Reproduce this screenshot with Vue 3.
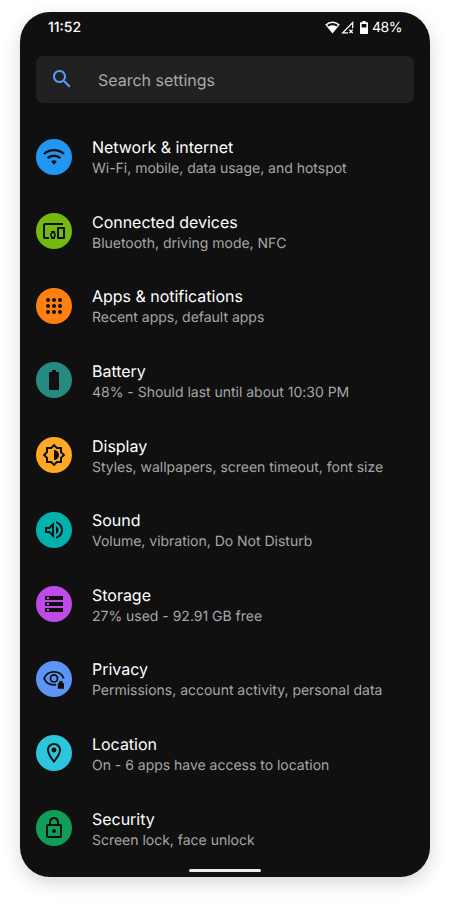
<script setup>
const items = [
  { title: 'Network & internet', detail: 'Wi-Fi, mobile, data usage, and hotspot', tone: 'blue', kind: 'wifi' },
  {
    title: 'Connected devices',
    detail: 'Bluetooth, driving mode, NFC',
    tone: 'lime',
    icon: 'M3 6h18V4H3c-1.1 0-2 .9-2 2v12c0 1.1.9 2 2 2h4v-2H3V6zm10 6H9v1.78c-.61.55-1 1.33-1 2.22s.39 1.67 1 2.22V20h4v-1.78c.61-.55 1-1.34 1-2.22s-.39-1.67-1-2.22V12zm-2 5.5c-.83 0-1.5-.67-1.5-1.5s.67-1.5 1.5-1.5 1.5.67 1.5 1.5-.67 1.5-1.5 1.5zM22 8h-6c-.5 0-1 .5-1 1v10c0 .5.5 1 1 1h6c.5 0 1-.5 1-1V9c0-.5-.5-1-1-1zm-1 10h-4v-8h4v8z',
  },
  { title: 'Apps & notifications', detail: 'Recent apps, default apps', tone: 'orange', kind: 'dots' },
  {
    title: 'Battery',
    detail: '48% - Should last until about 10:30 PM',
    tone: 'teal',
    icon: 'M15.67 4H14V2h-4v2H8.33C7.6 4 7 4.6 7 5.33v15.33C7 21.4 7.6 22 8.33 22h7.33c.74 0 1.34-.6 1.34-1.33V5.33C17 4.6 16.4 4 15.67 4z',
  },
  {
    title: 'Display',
    detail: 'Styles, wallpapers, screen timeout, font size',
    tone: 'amber',
    icon: 'M20 15.31L23.31 12 20 8.69V4h-4.69L12 .69 8.69 4H4v4.69L.69 12 4 15.31V20h4.69L12 23.31 15.31 20H20v-4.69zm-2-.83V18h-3.52L12 20.48 9.52 18H6v-3.52L3.52 12 6 9.52V6h3.52L12 3.52 14.48 6H18v3.52L20.48 12 18 14.48zM12 7v10c2.76 0 5-2.24 5-5s-2.24-5-5-5z',
  },
  {
    title: 'Sound',
    detail: 'Volume, vibration, Do Not Disturb',
    tone: 'cyan',
    icon: 'M3 9v6h4l5 5V4L7 9H3zm7-.17v6.34L7.83 13H5v-2h2.83L10 8.83zM16.5 12c0-1.77-1.02-3.29-2.5-4.03v8.05c1.48-.73 2.5-2.25 2.5-4.02zM14 3.23v2.06c2.89.86 5 3.54 5 6.71s-2.11 5.85-5 6.71v2.06c4.01-.91 7-4.49 7-8.77s-2.99-7.86-7-8.77z',
  },
  {
    title: 'Storage',
    detail: '27% used - 92.91 GB free',
    tone: 'purple',
    icon: 'M3 20h18v-4H3v4zm2-3h2v2H5v-2zM3 4v4h18V4H3zm4 3H5V5h2v2zm-4 7h18v-4H3v4zm2-3h2v2H5v-2z',
  },
  { title: 'Privacy', detail: 'Permissions, account activity, personal data', tone: 'sky', kind: 'eye' },
  {
    title: 'Location',
    detail: 'On - 6 apps have access to location',
    tone: 'aqua',
    icon: 'M12 2C8.13 2 5 5.13 5 9c0 5.25 7 13 7 13s7-7.75 7-13c0-3.87-3.13-7-7-7zM7 9c0-2.76 2.24-5 5-5s5 2.24 5 5c0 2.88-2.88 7.19-5 9.88C9.92 16.21 7 11.85 7 9zM12 6.5a2.5 2.5 0 1 0 0 5 2.5 2.5 0 0 0 0-5z',
  },
  {
    title: 'Security',
    detail: 'Screen lock, face unlock',
    tone: 'green',
    icon: 'M18 8h-1V6c0-2.76-2.24-5-5-5S7 3.24 7 6v2H6c-1.1 0-2 .9-2 2v10c0 1.1.9 2 2 2h12c1.1 0 2-.9 2-2V10c0-1.1-.9-2-2-2zM9 6c0-1.66 1.34-3 3-3s3 1.34 3 3v2H9V6zm9 14H6V10h12v10zm-6-3c1.1 0 2-.9 2-2s-.9-2-2-2-2 .9-2 2 .9 2 2 2z',
  },
]
const dots = [6, 12, 18]
</script>

<template>
  <div class="page">
    <main class="phone">
      <header class="status">
        <time>11:52</time>
        <div class="indicators">
          <svg class="wifi-signal" viewBox="0 0 15 13">
            <path d="M.2 3.6Q7.5-2.4 14.8 3.6L7.5 12.6Z" fill="#fff" />
            <path d="M2.1 4Q7.5.1 12.9 4L11.6 5.6Q7.5 3 3.4 5.6Z" fill="#101010" />
          </svg>
          <svg class="cell-signal" viewBox="0 0 13 13">
            <path d="M7 11.9H1.7L11.7 1.6V7.2" fill="none" stroke="#fff" stroke-width="1.3" />
            <path d="M8.4 8.8l3.3 3.3M11.7 8.8l-3.3 3.3" stroke="#fff" stroke-width="1.3" />
          </svg>
          <svg class="battery-level" viewBox="0 0 8 13">
            <path fill="#fff" fill-rule="evenodd" d="M2.4 0h3.2v1.2H7.3q.7 0 .7.7v10.4q0 .7-.7.7H.7q-.7 0-.7-.7V1.9q0-.7.7-.7h1.7zM1.6 3v3.6h4.8V3z" />
          </svg>
          <span>48%</span>
        </div>
      </header>

      <div class="search">
        <svg viewBox="0 0 24 24">
          <path d="M15.5 14h-.79l-.28-.27C15.41 12.59 16 11.11 16 9.5 16 5.91 13.09 3 9.5 3S3 5.91 3 9.5 5.91 16 9.5 16c1.61 0 3.09-.59 4.23-1.57l.27.28v.79l5 4.99L20.49 19l-4.99-5zm-6 0C7.01 14 5 11.99 5 9.5S7.01 5 9.5 5 14 7.01 14 9.5 11.99 14 9.5 14z" />
        </svg>
        <span>Search settings</span>
      </div>

      <ul class="list">
        <li v-for="item in items" :key="item.title" class="row">
          <div class="badge" :class="item.tone">
            <svg viewBox="0 0 24 24">
              <g v-if="item.kind === 'dots'">
                <template v-for="y in dots" :key="y">
                  <circle v-for="x in dots" :key="x" :cx="x" :cy="y" r="2" />
                </template>
              </g>
              <g v-else-if="item.kind === 'wifi'">
                <path class="line arc" d="M2 9A15 15 0 0 1 22 9M5.6 13.2A9.6 9.6 0 0 1 18.4 13.2" />
                <path d="M9.2 16.4A4.6 4.6 0 0 1 14.8 16.4L12 19.7z" />
              </g>
              <g v-else-if="item.kind === 'eye'">
                <path d="M14 17.7Q13 17.9 12 17.9C7.6 17.9 3.8 15.4 2.1 11.4 3.8 7.4 7.6 4.9 12 4.9S20.2 7.4 21.7 11.4" class="line" />
                <circle cx="12" cy="11.4" r="3.5" class="line" />
                <path d="M15.8 16.2H17v-.6a1.9 1.9 0 0 1 3.8 0v.6h1.2v5.6h-6.2z" />
              </g>
              <path v-else :d="item.icon" />
            </svg>
          </div>
          <div class="copy">
            <h2>{{ item.title }}</h2>
            <p>{{ item.detail }}</p>
          </div>
        </li>
      </ul>
      <div class="home-bar"></div>
    </main>
  </div>
</template>

<style>
body {
  margin: 0;
  background: #fff;
}
</style>

<style scoped>
.page {
  box-sizing: border-box;
  height: 906px;
  padding: 12px 20px 0;
  overflow: hidden;
}
.phone {
  box-sizing: border-box;
  width: 410px;
  height: 865.4px;
  padding: 0 16px;
  display: flex;
  flex-direction: column;
  border-radius: 30px;
  background: #101010;
  box-shadow: 0 6px 18px rgba(0, 0, 0, 0.16);
  color: #fff;
  font-family: Inter, sans-serif;
  font-weight: 400;
  text-rendering: geometricPrecision;
}
.status {
  flex: none;
  display: flex;
  justify-content: space-between;
  height: 30px;
  padding: 0 12px;
  align-items: center;
  font-size: 14px;
  line-height: 20px;
}
.status time,
.indicators span {
  padding-top: 1px;
}
.status time {
  font-weight: 500;
}
.indicators {
  display: flex;
  align-items: center;
}
.indicators span {
  letter-spacing: -0.5px;
}
.wifi-signal {
  width: 15px;
  height: 13px;
}
.cell-signal {
  width: 13px;
  height: 13px;
  margin-left: 1px;
}
.battery-level {
  width: 8px;
  height: 13px;
  margin: 0 4px 0 6.5px;
}
.search {
  flex: none;
  box-sizing: border-box;
  display: flex;
  align-items: center;
  height: 47.6px;
  margin-top: 13.6px;
  padding-left: 13.6px;
  gap: 24.4px;
  border-radius: 7px;
  background: #212121;
  color: #a9a9a9;
  font-size: 16px;
}
.search svg {
  width: 24px;
  height: 24px;
  fill: #589df6;
}
.search span {
  padding-top: 2px;
}
.list {
  list-style: none;
  margin: 16.2px 0 0;
  padding: 0;
}
.row {
  display: flex;
  align-items: center;
  gap: 20px;
  height: 74.6px;
}
.badge {
  display: flex;
  align-items: center;
  justify-content: center;
  width: 36px;
  height: 36px;
  border-radius: 50%;
}
.badge svg {
  width: 24px;
  height: 24px;
  fill: #101010;
}
.badge .line {
  fill: none;
  stroke: #101010;
  stroke-width: 1.8;
}
.badge .arc {
  stroke-width: 2.3;
}
.blue { background: #2196f3; }
.lime { background: #73b90f; }
.orange { background: #ff7f11; }
.teal { background: #268a80; }
.amber { background: #ffa726; }
.cyan { background: #00b1ae; }
.purple { background: #c04ae8; }
.sky { background: #5c95f7; }
.aqua { background: #2bc6dc; }
.green { background: #109d58; }
.copy {
  padding-top: 2.6px;
}
.copy h2,
.copy p {
  margin: 0;
  font-weight: 400;
  white-space: nowrap;
}
.copy h2 {
  font-size: 16px;
  line-height: 22px;
  letter-spacing: -0.02px;
}
.copy p {
  color: #a6a6a6;
  font-size: 14px;
  line-height: 21.4px;
  letter-spacing: -0.015px;
}
.home-bar {
  flex: none;
  align-self: center;
  width: 72px;
  height: 2.5px;
  margin-top: 3.8px;
  border-radius: 2px;
  background: #eee;
}
</style>
